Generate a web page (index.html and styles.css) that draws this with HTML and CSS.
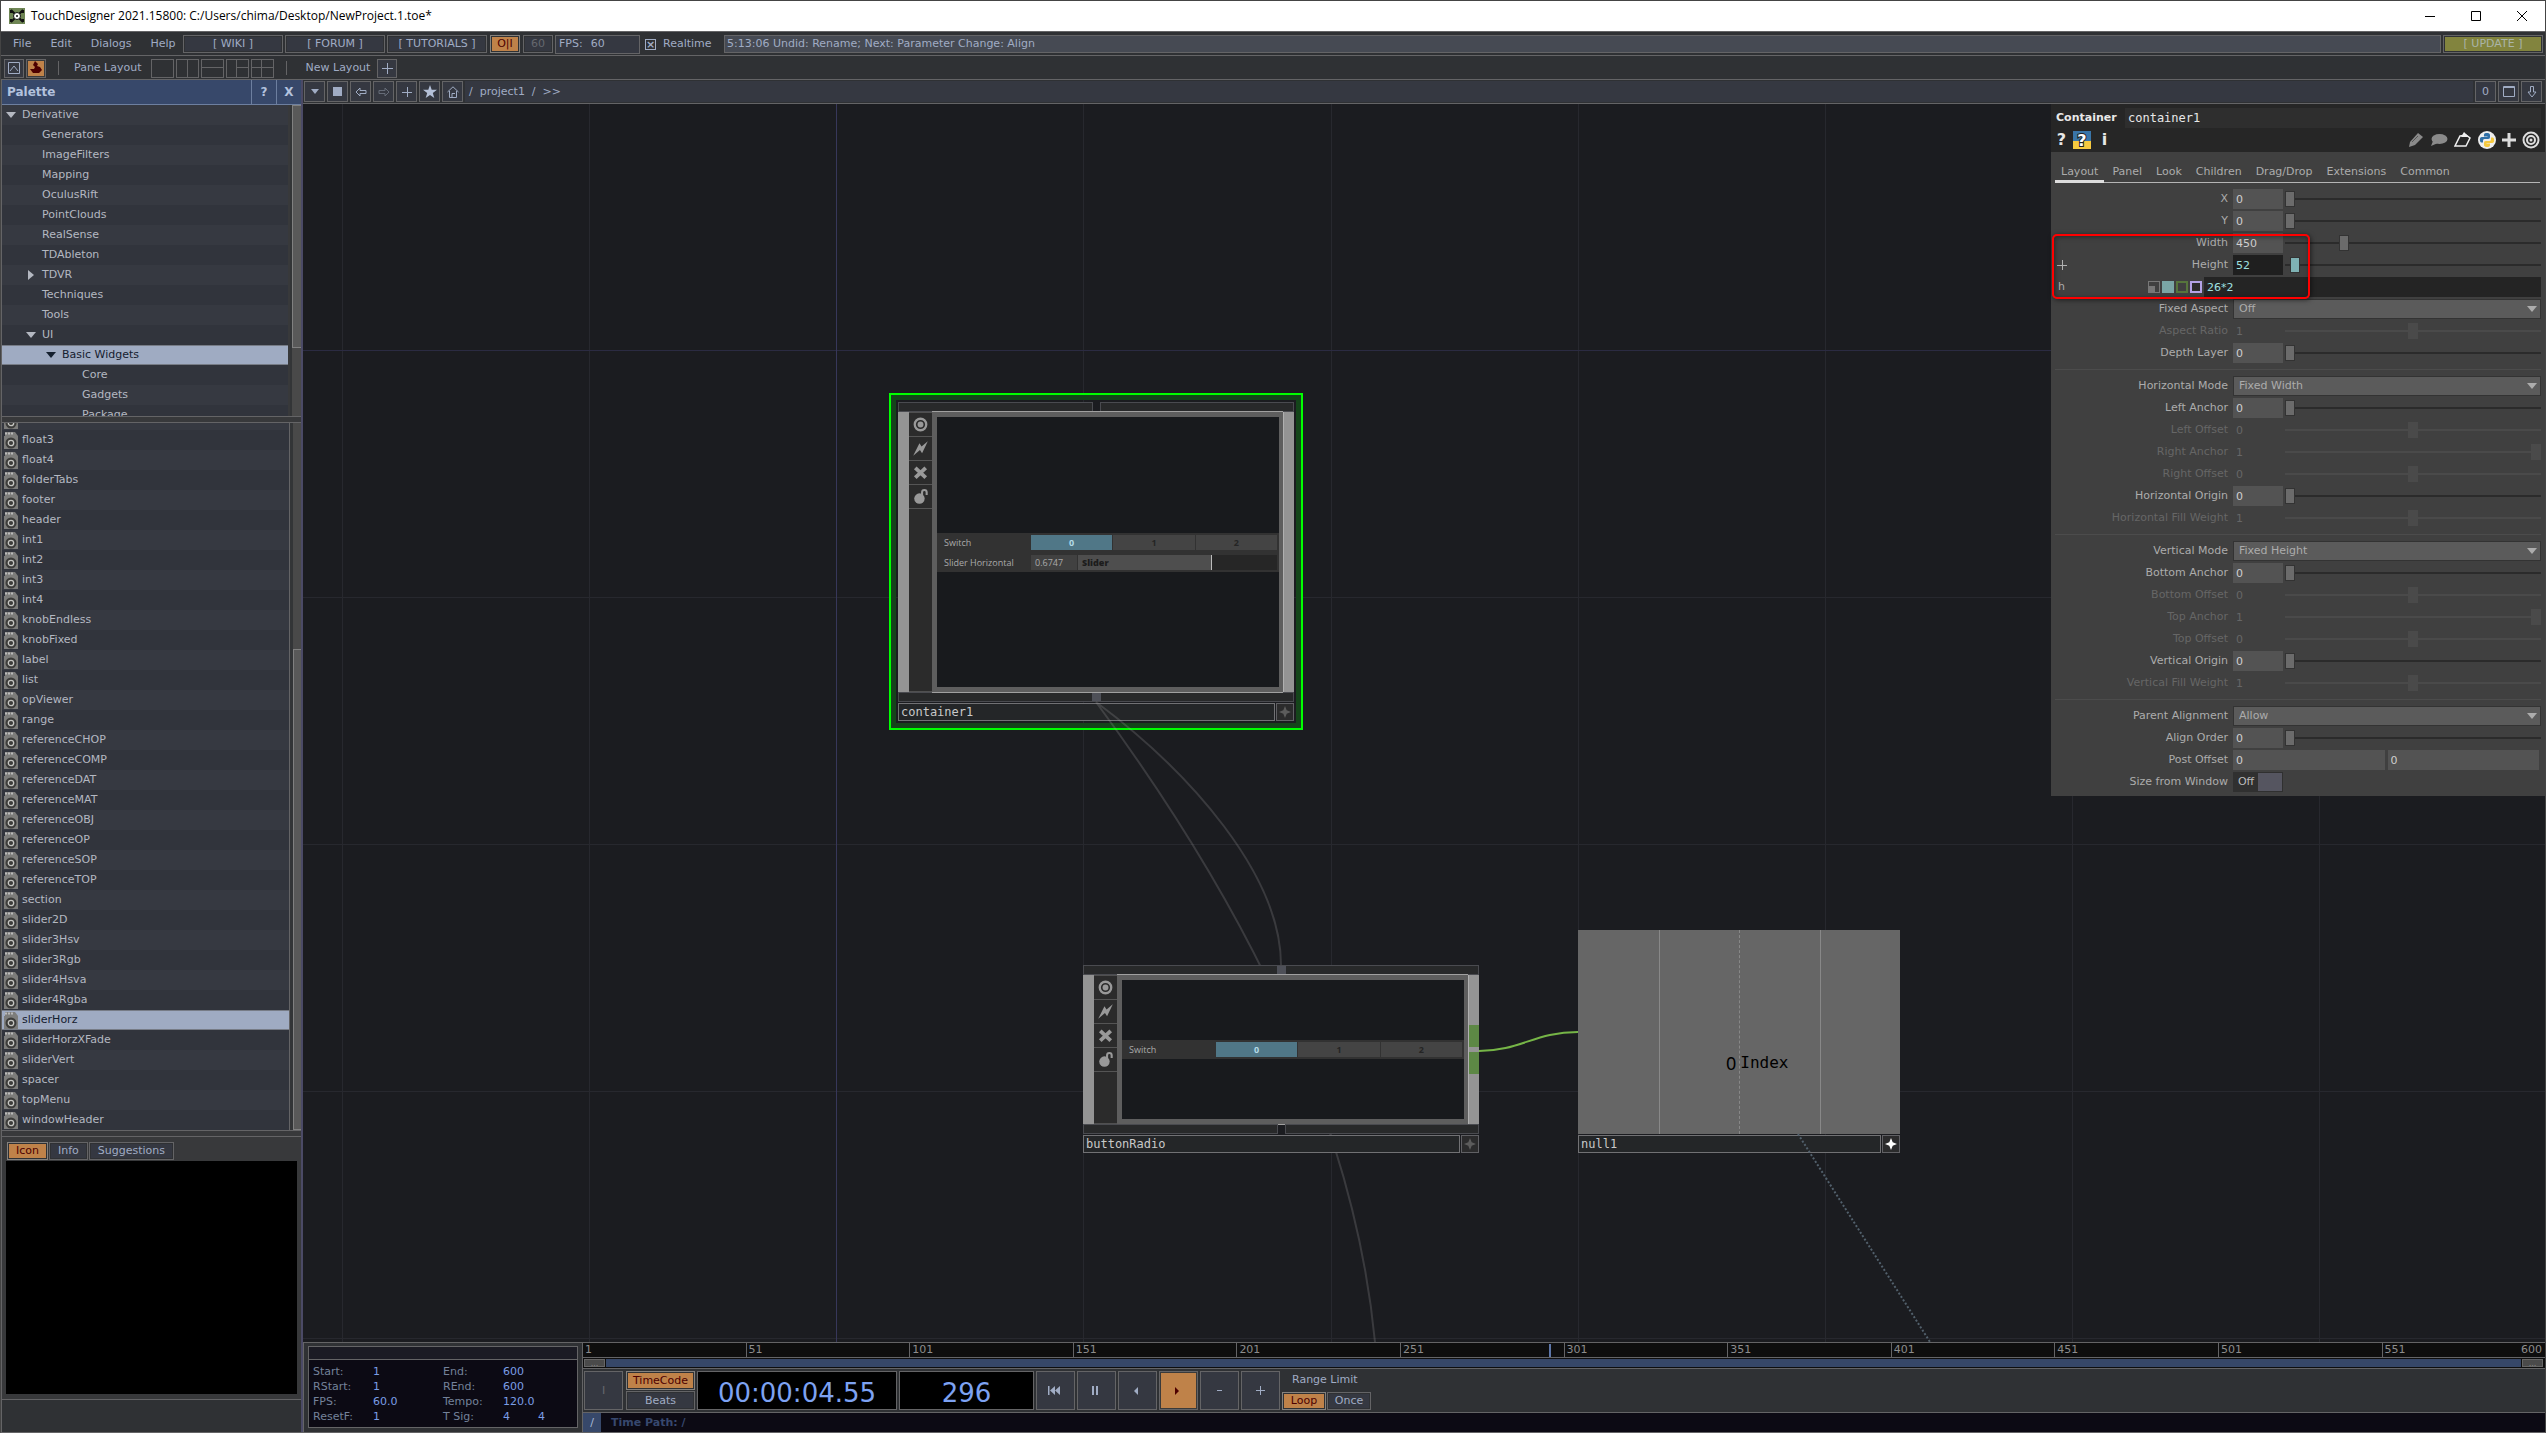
FILE: index.html
```html
<!DOCTYPE html>
<html lang="en">
<head>
<meta charset="utf-8">
<title>TouchDesigner</title>
<link rel="stylesheet" href="styles.css">
</head>
<body>
<svg class="defs" aria-hidden="true">
  <symbol id="comp" viewBox="0 0 14 17"><path d="M0 4V17H14V4L11 0H1V4Z" fill="#7d7d7b"/><path d="M1 1.500H9" stroke="#bbb" stroke-width="2" stroke-dasharray="2 1"/><circle cx="7" cy="11" r="5.500" fill="#3c3c3a"/><circle cx="7" cy="11" r="2.700" fill="none" stroke="#c4c4c0" stroke-width="1.300"/></symbol>
  <symbol id="viewer" viewBox="0 0 22 22"><circle cx="11" cy="11" r="5.500" fill="none" stroke="#999" stroke-width="2.200"/><circle cx="11" cy="11" r="2.800" fill="#999"/></symbol>
  <symbol id="bolt" viewBox="0 0 22 22"><path d="M4 18 10 6 12 9 18 4 12.500 15.500 10.500 12.500Z" fill="#999"/></symbol>
  <symbol id="cross" viewBox="0 0 22 22"><path d="M6 6.500 16 16M16 6.500 6 16" stroke="#999" stroke-width="3.600"/></symbol>
  <symbol id="lock" viewBox="0 0 22 22"><circle cx="10" cy="13" r="5" fill="#999"/><path d="M12.500 10V7a2.200 2.200 0 0 1 4.400 0V9.500" fill="none" stroke="#999" stroke-width="2"/></symbol>
  <symbol id="star4" viewBox="0 0 16 16"><path d="M8 2 9.700 6.300 14 8 9.700 9.700 8 14 6.300 9.700 2 8 6.300 6.300Z" fill="currentColor"/></symbol>
  <symbol id="down" viewBox="0 0 10 6"><path d="M0 0H10L5 6Z" fill="currentColor"/></symbol>
  <symbol id="right" viewBox="0 0 6 10"><path d="M0 0V10L6 5Z" fill="currentColor"/></symbol>
</svg>

<header class="titlebar">
  <svg width="16" height="16" viewBox="0 0 16 16"><rect width="16" height="16" fill="#6f8655"/><path d="M2 2 6 6M14 2 10 6M2 14 6 10M14 14 10 10M2 2V5M14 2V5M2 14V11M14 14V11" stroke="#111" stroke-width="2"/><circle cx="8" cy="8" r="3.500" fill="#fff" stroke="#111"/><circle cx="8" cy="8" r="1" fill="#111"/></svg>
  <span class="title">TouchDesigner 2021.15800: C:/Users/chima/Desktop/NewProject.1.toe*</span>
  <button aria-label="Minimize"><svg width="12" height="12"><path d="M1 6.500H11" stroke="#000"/></svg></button>
  <button aria-label="Maximize"><svg width="12" height="12"><path d="M1.500 1.500H10.500V10.500H1.500Z" stroke="#000" fill="none"/></svg></button>
  <button aria-label="Close"><svg width="12" height="12"><path d="M1 1 11 11M11 1 1 11" stroke="#000"/></svg></button>
</header>

<div class="menubar">
  <nav class="menus"><a href="#">File</a><a href="#">Edit</a><a href="#">Dialogs</a><a href="#">Help</a></nav>
  <button class="btn wide">[ WIKI ]</button>
  <button class="btn wide">[ FORUM ]</button>
  <button class="btn wide">[ TUTORIALS ]</button>
  <button class="btn small on">O|I</button>
  <button class="btn small dim">60</button>
  <div class="fps"><label for="fps">FPS:</label><input id="fps" value="60"></div>
  <label class="realtime"><input type="checkbox" checked>Realtime</label>
  <output class="status">5:13:06 Undid: Rename; Next: Parameter Change: Align</output>
  <button class="btn update">[ UPDATE ]</button>
</div>

<div class="layoutbar">
  <button class="sq" aria-label="Bookmark"><svg width="12" height="12"><path d="M.5 .5H11.500V11.500H.5ZM2 9 6 4 10 9" fill="none" stroke="#a0acc4"/></svg></button>
  <button class="sq on" aria-label="Palette"><svg width="12" height="14"><path d="M5 0 8 3 7 5 10 6 12 9 9 12H3L0 8 4 8 5 6 3 4Z" fill="#4d0000"/></svg></button>
  <i class="vsep"></i>
  <span class="bar-label">Pane Layout</span>
  <button class="pane" aria-label="Single"></button>
  <button class="pane" aria-label="Left right"><svg width="22" height="18"><path d="M11.500 0V18"/></svg></button>
  <button class="pane" aria-label="Top bottom"><svg width="22" height="18"><path d="M0 8.500H22"/></svg></button>
  <button class="pane" aria-label="Three"><svg width="22" height="18"><path d="M10.500 0V18M10.500 8.500H22"/></svg></button>
  <button class="pane" aria-label="Four"><svg width="22" height="18"><path d="M10.500 0V18M0 8.500H22"/></svg></button>
  <i class="vsep"></i>
  <span class="bar-label new">New Layout</span>
  <button class="sq" aria-label="Add layout"><svg width="12" height="12"><path d="M6.500 1V12M1 6.500H12" stroke="#a0acc4"/></svg></button>
</div>

<div class="workspace">
<aside class="palette">
  <div class="pal-head"><h2>Palette</h2><button>?</button><button>X</button></div>
  <div class="tree-wrap">
    <ul class="tree">
      <li><svg width="10" height="6"><use href="#down"/></svg>Derivative</li>
      <li class="d1">Generators</li>
      <li class="d1">ImageFilters</li>
      <li class="d1">Mapping</li>
      <li class="d1">OculusRift</li>
      <li class="d1">PointClouds</li>
      <li class="d1">RealSense</li>
      <li class="d1">TDAbleton</li>
      <li class="d2"><svg width="10" height="10"><use href="#right"/></svg>TDVR</li>
      <li class="d1">Techniques</li>
      <li class="d1">Tools</li>
      <li class="d2"><svg width="10" height="6"><use href="#down"/></svg>UI</li>
      <li class="d3 sel"><svg width="10" height="6"><use href="#down"/></svg>Basic Widgets</li>
      <li class="d4">Core</li>
      <li class="d4">Gadgets</li>
      <li class="d4">Package</li>
    </ul>
    <div class="track"><div class="thumb tree-thumb"></div></div>
  </div>
  <div class="list-wrap">
    <ul class="list">
      <li><svg><use href="#comp"/></svg>float2</li>
      <li><svg><use href="#comp"/></svg>float3</li>
      <li><svg><use href="#comp"/></svg>float4</li>
      <li><svg><use href="#comp"/></svg>folderTabs</li>
      <li><svg><use href="#comp"/></svg>footer</li>
      <li><svg><use href="#comp"/></svg>header</li>
      <li><svg><use href="#comp"/></svg>int1</li>
      <li><svg><use href="#comp"/></svg>int2</li>
      <li><svg><use href="#comp"/></svg>int3</li>
      <li><svg><use href="#comp"/></svg>int4</li>
      <li><svg><use href="#comp"/></svg>knobEndless</li>
      <li><svg><use href="#comp"/></svg>knobFixed</li>
      <li><svg><use href="#comp"/></svg>label</li>
      <li><svg><use href="#comp"/></svg>list</li>
      <li><svg><use href="#comp"/></svg>opViewer</li>
      <li><svg><use href="#comp"/></svg>range</li>
      <li><svg><use href="#comp"/></svg>referenceCHOP</li>
      <li><svg><use href="#comp"/></svg>referenceCOMP</li>
      <li><svg><use href="#comp"/></svg>referenceDAT</li>
      <li><svg><use href="#comp"/></svg>referenceMAT</li>
      <li><svg><use href="#comp"/></svg>referenceOBJ</li>
      <li><svg><use href="#comp"/></svg>referenceOP</li>
      <li><svg><use href="#comp"/></svg>referenceSOP</li>
      <li><svg><use href="#comp"/></svg>referenceTOP</li>
      <li><svg><use href="#comp"/></svg>section</li>
      <li><svg><use href="#comp"/></svg>slider2D</li>
      <li><svg><use href="#comp"/></svg>slider3Hsv</li>
      <li><svg><use href="#comp"/></svg>slider3Rgb</li>
      <li><svg><use href="#comp"/></svg>slider4Hsva</li>
      <li><svg><use href="#comp"/></svg>slider4Rgba</li>
      <li class="sel"><svg><use href="#comp"/></svg>sliderHorz</li>
      <li><svg><use href="#comp"/></svg>sliderHorzXFade</li>
      <li><svg><use href="#comp"/></svg>sliderVert</li>
      <li><svg><use href="#comp"/></svg>spacer</li>
      <li><svg><use href="#comp"/></svg>topMenu</li>
      <li><svg><use href="#comp"/></svg>windowHeader</li>
    </ul>
    <div class="track low"><div class="thumb list-thumb"></div></div>
  </div>
  <div class="info">
    <div class="tabs"><button class="btn on">Icon</button><button class="btn">Info</button><button class="btn">Suggestions</button></div>
    <div class="preview"></div>
  </div>
  <div class="pal-foot"></div>
</aside>

<main class="editor">
  <div class="pathbar">
    <button class="pb" aria-label="Pane type"><svg width="8" height="5"><path d="M0 0H8L4 5Z" fill="#a0acc4"/></svg></button>
    <button class="pb" aria-label="Stop"><svg width="9" height="9"><rect width="9" height="9" fill="#a0acc4"/></svg></button>
    <button class="pb" aria-label="Back"><svg width="12" height="10"><path d="M1 5 5 1V3.500H11V6.500H5V9Z" fill="none" stroke="#a0acc4"/></svg></button>
    <button class="pb" aria-label="Forward"><svg width="12" height="10"><path d="M11 5 7 1V3.500H1V6.500H7V9Z" fill="none" stroke="#666c78"/></svg></button>
    <button class="pb" aria-label="Add"><svg width="10" height="10"><path d="M5.500 0V10M0 5.500H10" stroke="#a0acc4"/></svg></button>
    <button class="pb" aria-label="Bookmarks"><svg width="14" height="13"><path d="M7 0 8.700 4.800H14L9.800 7.900 11.300 13 7 9.900 2.700 13 4.200 7.900 0 4.800H5.300Z" fill="#b4c0d8"/></svg></button>
    <button class="pb" aria-label="Home"><svg width="12" height="12"><path d="M2.500 5V11.500H9.500V5M.5 6 6 .8 11.500 6M5 11V7.500H8" fill="none" stroke="#a0acc4"/></svg></button>
    <div class="path">/&nbsp; project1&nbsp; /&nbsp; &gt;&gt;</div>
    <button class="pb">0</button>
    <button class="pb" aria-label="Maximize pane"><svg width="12" height="11"><path d="M.5 .5H11.500V10.500H.5ZM0 1.500H12" fill="none" stroke="#a0acc4"/></svg></button>
    <button class="pb" aria-label="Link pane"><svg width="10" height="12"><path d="M3.500 .5H6.500V6H9L5 11 1 6H3.500Z" fill="none" stroke="#a0acc4"/></svg></button>
  </div>

  <section class="network">
    <svg class="wires" width="100%" height="100%">
      <g transform="translate(-303 -104)" fill="none">
        <path stroke="#27282e" d="M342.500 104V3000M589.500 104V3000M1083.500 104V3000M1331.500 104V3000M1578.500 104V3000M1825.500 104V3000M2072.500 104V3000M2319.500 104V3000M303 597.500H4000M303 844.500H4000M303 1091.500H4000M303 1338.500H4000"/>
        <path stroke="#2b2b42" d="M303 350.500H4000"/><path stroke="#37375a" d="M836.500 104V3000"/>
      </g>
    </svg>

    <article class="node container1">
      <div class="strip split"><i></i><i></i></div>
      <div class="body tall">
        <i class="side"></i>
        <div class="flags"><svg><use href="#viewer"/></svg><svg><use href="#bolt"/></svg><svg><use href="#cross"/></svg><svg><use href="#lock"/></svg></div>
        <div class="view">
          <div class="band">
            <div class="wrow"><span>Switch</span><button class="w act">0</button><button class="w">1</button><button class="w">2</button></div>
            <div class="wrow"><span>Slider Horizontal</span><span class="val">0.6747</span><b class="fill">Slider</b></div>
          </div>
        </div>
        <i class="side"></i>
      </div>
      <div class="strip plug"><i></i></div>
      <div class="name"><input aria-label="Node name" value="container1"><button aria-label="Activate"><svg><use href="#star4"/></svg></button></div>
    </article>

    <svg class="wires" width="100%" height="100%">
      <g transform="translate(-303 -104)" fill="none" stroke-width="2">
        <path stroke="#aaa" stroke-opacity=".22" d="M1096 702C1190 772 1281 875 1281 965M1096 702C1205 850 1350 1080 1375 1342"/>
        <path stroke="#76b547" d="M1479 1051C1520 1051 1535 1032 1578 1032"/>
      </g>
    </svg>

    <article class="node radio">
      <div class="strip plug"><i></i></div>
      <div class="body short">
        <i class="side"></i>
        <div class="flags"><svg><use href="#viewer"/></svg><svg><use href="#bolt"/></svg><svg><use href="#cross"/></svg><svg><use href="#lock"/></svg></div>
        <div class="view">
          <div class="band">
            <div class="wrow"><span>Switch</span><button class="w act">0</button><button class="w">1</button><button class="w">2</button></div>
          </div>
        </div>
        <div class="side out"><i></i><i></i></div>
      </div>
      <div class="strip split"><i></i><i></i></div>
      <div class="name"><input aria-label="Node name" value="buttonRadio"><button aria-label="Activate"><svg><use href="#star4"/></svg></button></div>
    </article>

    <article class="node null1">
      <div class="chop"><i></i><i></i><i></i><i></i><p><span>0</span><span class="chan">Index</span></p></div>
      <div class="name lit"><input aria-label="Node name" value="null1"><button aria-label="Activate"><svg><use href="#star4"/></svg></button></div>
    </article>

    <svg class="wires over" width="100%" height="100%">
      <g transform="translate(-303 -104)" fill="none" stroke-width="2">
        <path stroke="#52606c" stroke-dasharray="2 2" d="M1798 1134 1930 1342"/>
      </g>
    </svg>

    <form class="params">
      <div class="p-head">
        <div class="p-title"><label for="opname">Container</label><input id="opname" value="container1"></div>
        <div class="p-icons">
          <b>?</b>
          <svg width="18" height="18"><rect width="18" height="18" fill="#3a75a8"/><path d="M0 10H18V18H0Z" fill="#f5c93f"/><text x="9" y="15" text-anchor="middle" class="pyq">?</text></svg>
          <b>i</b>
          <span class="grow"></span>
          <svg width="16" height="16"><path d="M1 15 2 10 10 1 15 5 7 13Z" fill="#8a8a8a"/><path d="M4 10 10 4" stroke="#555" stroke-width="1"/></svg>
          <svg width="18" height="14"><ellipse cx="9.500" cy="6" rx="8" ry="5" fill="#8a8a8a"/><path d="M3 8 1 13 8 10Z" fill="#8a8a8a"/></svg>
          <svg width="18" height="16"><path d="M6 4 12 3 16 6 12 14 1 14Z" fill="none" stroke="#eee" stroke-width="1.500"/><path d="M7 5 10 0 15 5Z" fill="#eee"/></svg>
          <svg width="18" height="18" viewBox="0 0 18 18"><circle cx="9" cy="9" r="9" fill="#eee"/><path d="M9 2C5.500 2 6 3.500 6 5.500H9.500V6H4C2 6 1.500 8 2 10 2.500 12 4 11.500 5 11.500V9.500C5 8 6 8 8 8 11 8 12 8 12 6V4C12 2.500 10.500 2 9 2Z" fill="#2f6fa6"/><path d="M9 16C12.500 16 12 14.500 12 12.500H8.500V12H14C16 12 16.500 10 16 8 15.500 6 14 6.500 13 6.500V8.500C13 10 12 10 10 10 7 10 6 10 6 12V14C6 15.500 7.500 16 9 16Z" fill="#f5c93f"/></svg>
          <svg width="14" height="14"><path d="M7 0V14M0 7H14" stroke="#ddd" stroke-width="3"/></svg>
          <svg width="18" height="18"><g fill="none" stroke="#ddd" stroke-width="2"><circle cx="9" cy="9" r="7.500"/><circle cx="9" cy="9" r="4"/></g><circle cx="9" cy="9" r="1.500" fill="#ddd"/></svg>
        </div>
      </div>
      <nav class="p-tabs"><a href="#" class="cur">Layout</a><a href="#">Panel</a><a href="#">Look</a><a href="#">Children</a><a href="#">Drag/Drop</a><a href="#">Extensions</a><a href="#">Common</a></nav>

      <div class="rows">
        <div class="row"><label for="x">X</label><input id="x" value="0"><input type="range" aria-label="X" value="0"></div>
        <div class="row"><label for="y">Y</label><input id="y" value="0"><input type="range" aria-label="Y" value="0"></div>
        <div class="row"><label for="w">Width</label><input id="w" value="450"><input type="range" aria-label="Width" value="22"></div>
        <div class="row expr"><label for="h">Height</label><input id="h" value="52"><input type="range" aria-label="Height" value="2"></div>
        <div class="row exprline"><label for="he">h</label><i class="m1"></i><i class="m2"></i><i class="m3"></i><i class="m4"></i><input id="he" value="26*2"></div>
        <div class="row sel-row"><label for="fa">Fixed Aspect</label><select id="fa"><option>Off</option></select><svg><use href="#down"/></svg></div>
        <div class="row off"><label for="ar">Aspect Ratio</label><input id="ar" value="1" disabled><input type="range" aria-label="Aspect Ratio" value="50" disabled></div>
        <div class="row"><label for="dl">Depth Layer</label><input id="dl" value="0"><input type="range" aria-label="Depth Layer" value="0"></div>
      </div>
      <div class="rows">
        <div class="row sel-row"><label for="hm">Horizontal Mode</label><select id="hm"><option>Fixed Width</option></select><svg><use href="#down"/></svg></div>
        <div class="row"><label for="la">Left Anchor</label><input id="la" value="0"><input type="range" aria-label="Left Anchor" value="0"></div>
        <div class="row off"><label for="lo">Left Offset</label><input id="lo" value="0" disabled><input type="range" aria-label="Left Offset" value="50" disabled></div>
        <div class="row off"><label for="ra">Right Anchor</label><input id="ra" value="1" disabled><input type="range" aria-label="Right Anchor" value="100" disabled></div>
        <div class="row off"><label for="ro">Right Offset</label><input id="ro" value="0" disabled><input type="range" aria-label="Right Offset" value="50" disabled></div>
        <div class="row"><label for="ho">Horizontal Origin</label><input id="ho" value="0"><input type="range" aria-label="Horizontal Origin" value="0"></div>
        <div class="row off"><label for="hf">Horizontal Fill Weight</label><input id="hf" value="1" disabled><input type="range" aria-label="Horizontal Fill Weight" value="50" disabled></div>
      </div>
      <div class="rows">
        <div class="row sel-row"><label for="vm">Vertical Mode</label><select id="vm"><option>Fixed Height</option></select><svg><use href="#down"/></svg></div>
        <div class="row"><label for="ba">Bottom Anchor</label><input id="ba" value="0"><input type="range" aria-label="Bottom Anchor" value="0"></div>
        <div class="row off"><label for="bo">Bottom Offset</label><input id="bo" value="0" disabled><input type="range" aria-label="Bottom Offset" value="50" disabled></div>
        <div class="row off"><label for="ta">Top Anchor</label><input id="ta" value="1" disabled><input type="range" aria-label="Top Anchor" value="100" disabled></div>
        <div class="row off"><label for="to">Top Offset</label><input id="to" value="0" disabled><input type="range" aria-label="Top Offset" value="50" disabled></div>
        <div class="row"><label for="vo">Vertical Origin</label><input id="vo" value="0"><input type="range" aria-label="Vertical Origin" value="0"></div>
        <div class="row off"><label for="vf">Vertical Fill Weight</label><input id="vf" value="1" disabled><input type="range" aria-label="Vertical Fill Weight" value="50" disabled></div>
      </div>
      <div class="rows">
        <div class="row sel-row"><label for="pa">Parent Alignment</label><select id="pa"><option>Allow</option></select><svg><use href="#down"/></svg></div>
        <div class="row"><label for="ao">Align Order</label><input id="ao" value="0"><input type="range" aria-label="Align Order" value="0"></div>
        <div class="row pair"><label for="po">Post Offset</label><input id="po" value="0"><input aria-label="Post Offset Y" value="0"></div>
        <div class="row"><label for="sw">Size from Window</label><button type="button" id="sw" class="toggle"><span>Off</span></button></div>
      </div>
      <div class="mark"></div>
    </form>
  </section>
</main>

<footer class="timeline">
  <div class="stats-box"><div class="stats">
    <div class="stats-head"></div>
    <dl>
      <dt>Start:</dt><dd>1</dd><dt>End:</dt><dd>600</dd>
      <dt>RStart:</dt><dd>1</dd><dt>REnd:</dt><dd>600</dd>
      <dt>FPS:</dt><dd>60.0</dd><dt>Tempo:</dt><dd>120.0</dd>
      <dt>ResetF:</dt><dd>1</dd><dt>T Sig:</dt><dd>4<span>4</span></dd>
    </dl>
  </div></div>
  <div class="time">
    <div class="ruler"><span>1</span><span>51</span><span>101</span><span>151</span><span>201</span><span>251</span><span>301</span><span>351</span><span>401</span><span>451</span><span>501</span><span class="last">551<em>600</em></span><i class="playhead"></i></div>
    <div class="range"><button>...</button><i></i><button>...</button></div>
    <div class="transport">
      <button class="tb dim">I</button>
      <div class="stack"><button class="btn on">TimeCode</button><button class="btn">Beats</button></div>
      <output class="clock tc">00:00:04.55</output>
      <output class="clock fr">296</output>
      <button class="tb play" aria-label="Rewind"><svg width="12" height="9"><path d="M.5 0V9" stroke="#a0acc4" stroke-width="2"/><path d="M2 4.500 7 0V9ZM7 4.500 12 0V9Z" fill="#a0acc4"/></svg></button>
      <button class="tb play" aria-label="Pause"><svg width="6" height="9"><path d="M1 0V9M5 0V9" stroke="#a0acc4" stroke-width="2"/></svg></button>
      <button class="tb play" aria-label="Play back"><svg width="4" height="8"><path d="M4 0V8L0 4Z" fill="#a0acc4"/></svg></button>
      <button class="tb play on" aria-label="Play"><svg width="4" height="8"><path d="M0 0V8L4 4Z" fill="#4d0000"/></svg></button>
      <button class="tb" aria-label="Previous frame"><svg width="5" height="3"><path d="M0 1.500H5" stroke="#a0acc4"/></svg></button>
      <button class="tb" aria-label="Next frame"><svg width="9" height="9"><path d="M4.500 0V9M0 4.500H9" stroke="#a0acc4"/></svg></button>
      <div class="limit"><span>Range Limit</span><div><button class="btn on">Loop</button><button class="btn">Once</button></div></div>
    </div>
    <div class="tpath"><span>/</span><b>Time Path: /</b></div>
  </div>
</footer>
</div>
</body>
</html>
```
FILE: styles.css
```css
* { box-sizing: border-box; }
:root { --line: #646466; --ink: #a0acc4; --bar: #2f3134; --cell: #353841; --orange: #bf8249; --deep: #4d0000; }
body {
  margin: 0; height: 100vh; overflow: hidden; display: flex; flex-direction: column;
  font: 11px/14px "DejaVu Sans", sans-serif; color: var(--ink);
  background: var(--bar); border: 1px solid #444; border-bottom-color: var(--line);
}
button, input, select, output { font: inherit; color: inherit; margin: 0; padding: 0; border: 0; background: none; border-radius: 0; min-width: 0; }
button { display: flex; align-items: center; justify-content: center; }
a { color: inherit; text-decoration: none; }
ul, h2, p, dl, dd { margin: 0; padding: 0; list-style: none; }
svg { flex: none; display: block; }
.defs { position: absolute; width: 0; height: 0; }
.grow { flex: 1; }

/* window title */
.titlebar { flex: none; height: 30px; background: #fff; color: #000; display: flex; align-items: center; padding-left: 8px; font: 12px/16px "Open Sans", sans-serif; }
.title { flex: 1; margin-left: 6px; }
.titlebar button { width: 46px; height: 30px; }

/* top bars */
.menubar { flex: none; height: 24px; display: flex; align-items: center; gap: 2px; border-top: 1px solid var(--line); padding: 1px 2px 0 0; }
.menus { display: flex; gap: 19px; width: 180px; padding-left: 12px; }
.btn { background: var(--cell); border: 1px solid var(--line); height: 18px; box-shadow: inset 0 0 0 1px #2f3134; white-space: nowrap; }
.btn.on { background: var(--orange); color: var(--deep); border-color: #85827e; }
.dim { color: #65686f; }
.wide, .update { width: 100px; }
.small { width: 30px; margin-left: 1px; }
.update { background: #82843e; color: #aab4a8; }
.fps { width: 85px; height: 19px; background: var(--cell); border: 1px solid var(--line); display: flex; align-items: center; gap: 8px; padding-left: 3px; }
.fps input { width: 40px; }
.realtime { display: flex; align-items: center; gap: 7px; width: 77px; margin-left: 3px; }
.realtime input { appearance: none; width: 11px; height: 11px; border: 1px solid var(--ink); display: grid; place-items: center; }
.realtime input::after { content: "×"; font: bold 11px/9px "DejaVu Sans"; color: var(--ink); }
.status { flex: 1; height: 18px; background: #464a53; border: 1px solid var(--line); padding-left: 2px; line-height: 16px; }
.layoutbar { flex: none; height: 24px; display: flex; align-items: center; gap: 2px; border-top: 1px solid var(--line); padding: 1px 0 0 3px; }
.sq { width: 20px; height: 19px; background: var(--cell); border: 1px solid var(--line); }
.sq.on { background: var(--orange); box-shadow: inset 0 0 0 1px #3a3a3a; }
.vsep { width: 1px; height: 14px; background: var(--line); margin: 0 10px; }
.bar-label { margin: 0 7px 0 3px; }
.bar-label.new { margin-right: 5px; margin-left: 7px; }
.pane { width: 23px; height: 19px; border: 1px solid var(--line); }
.pane path { stroke: var(--line); fill: none; }

/* workspace: palette left, editor and timeline right */
.workspace { flex: 1; min-height: 0; display: grid; grid-template: 1fr 90px / 302px 1fr; border-top: 1px solid var(--line); }
.palette { grid-row: 1 / 3; display: flex; flex-direction: column; background: #38393b; border-left: 1px solid var(--line); border-right: 2px solid #4b4a66; min-height: 0; }
.pal-head { flex: none; height: 25px; background: #37486a; border-bottom: 1px solid #6d7f9f; display: flex; color: #b3c2dd; font-weight: bold; }
.pal-head h2 { flex: 1; font-size: 12px; line-height: 25px; padding-left: 5px; }
.pal-head button { width: 25px; border-left: 1px solid #6d7f9f; font-size: 12px; font-weight: bold; }
.tree-wrap { flex: none; height: 312px; display: flex; border-bottom: 1px solid var(--line); }
.tree, .list { flex: 1; overflow: hidden; display: flex; flex-direction: column; color: #b4b8c1; }
.tree { margin-right: 2px; }
.tree li, .list li { flex: none; height: 20px; display: flex; align-items: center; background: #31343c; }
.tree li:nth-child(odd), .list li:nth-child(odd) { background: #363941; }
.tree li { padding-left: 4px; gap: 6px; }
.tree .d1 { padding-left: 40px; }
.tree .d2 { padding-left: 24px; }
.tree .d3 { padding-left: 44px; }
.tree .d4 { padding-left: 80px; }
.palette li.sel { background: #9fabc2; color: #15202f; box-shadow: inset 0 1px #777c86, inset 0 -1px #777c86; }
.track { width: 11px; background: #494949; border-left: 2px solid #333537; }
.track.low { border-left-width: 3px; display: flex; flex-direction: column; justify-content: flex-end; }
.thumb { background: #595959; border: 1px solid #808080; border-right: 0; }
.tree-thumb { height: 78%; }
.list-thumb { height: 68%; }
.list-wrap { flex: 1; min-height: 0; margin-top: 5px; display: flex; border-bottom: 1px solid var(--line); border-top: 1px solid var(--line); }
.list { justify-content: flex-end; border-right: 1px solid var(--line); }
.list li { padding-left: 2px; gap: 4px; }
.list svg { width: 14px; height: 17px; }
.info { flex: none; height: 263px; margin-top: 5px; border-top: 1px solid var(--line); padding: 5px 4px; display: flex; flex-direction: column; }
.tabs { display: flex; gap: 1px; padding-left: 1px; }
.tabs .btn { padding: 0 8px; }
.preview { flex: 1; background: #000; margin-top: 1px; }
.pal-foot { flex: none; height: 33px; border-top: 1px solid var(--line); background: var(--bar); }

/* editor */
.editor { display: flex; flex-direction: column; min-width: 0; min-height: 0; }
.pathbar { flex: none; height: 24px; display: flex; align-items: center; gap: 2px; padding: 0 3px 0 1px; border-bottom: 1px solid var(--line); background: var(--bar); }
.pb { width: 21px; height: 21px; background: var(--cell); border: 1px solid var(--line); }
.path { flex: 1; background: var(--cell); height: 21px; line-height: 21px; padding-left: 4px; }
.network { flex: 1; min-height: 0; position: relative; overflow: hidden; background: #1b1c20; }
.wires { position: absolute; inset: 0; }
.wires.over { pointer-events: none; }

/* nodes on the canvas */
.node { position: absolute; }
.container1 { left: 586px; top: 289px; width: 414px; border: 2px solid #00ff00; box-shadow: inset 0 0 0 5px #14451a; padding: 7px; }
.radio { left: 780px; top: 861px; width: 396px; }
.null1 { left: 1275px; top: 826px; width: 322px; }
.strip { height: 10px; display: flex; justify-content: center; }
.split { gap: 7px; }
.split i { flex: 1; background: #28292a; border: 1px solid #4a4b50; }
.plug { background: #28292a; border: 1px solid #4a4b50; }
.plug i { width: 9px; background: #4e5058; }
.body { display: flex; }
.tall { height: 280px; }
.short { height: 149px; }
.side { width: 11px; background: #949494; }
.flags { width: 23px; background: #2b2b2b; border: solid #505050; border-width: 1px 0; }
.flags svg { width: 23px; height: 24px; border-bottom: 1px solid #555; }
.view { flex: 1; border: 5px solid #5e5e5e; border-right-width: 4px; box-shadow: 0 -1px #a0a0a0, 0 1px #a0a0a0; display: flex; flex-direction: column; justify-content: center; background: #181a1d; }
.body .side:last-child { border-left: 1px solid #b0b0b0; }
.out { display: flex; flex-direction: column; justify-content: center; gap: 5px; }
.out i { height: 22px; background: #5d8845; }
.band { background: #323232; padding: 2px; display: grid; gap: 5px; font: 9px/15px "Open Sans", sans-serif; color: #aaa; }
.wrow { display: grid; grid-template-columns: 91px 1fr 1fr 1fr; height: 15px; column-gap: 1px; }
.wrow > span:first-child { padding-left: 5px; }
.w { background: #444; color: #252525; font-weight: bold; }
.w.act { background: #507787; color: #b5dbe8; }
.wrow:nth-child(2) { grid-template-columns: 91px 46px 1fr; }
.val { background: #414141; padding-left: 4px; }
.fill { background: linear-gradient(90deg, #4e4e4e 0 133px, #bbb 133px 134px, #262626 134px); color: #1c1c1c; padding-left: 4px; font-weight: 800; }
.name { margin-top: 1px; display: flex; gap: 1px; }
.name input { flex: 1; height: 18px; background: #242628; border: 1px solid #717174; color: #c9c9c9; font: 12px/16px "DejaVu Sans Mono", monospace; padding-left: 2px; }
.name button { width: 18px; height: 18px; border: 1px solid #606064; background: #2b2b2c; color: #5c5c5c; }
.name.lit button { color: #fff; }
.name svg { width: 16px; height: 16px; }
.chop { height: 204px; background: #666; display: grid; grid-template-columns: repeat(4, 1fr); position: relative; }
.chop i { border-left: 1px solid #888; }
.chop i:first-child { border: 0; }
.chop i:nth-child(3) { border-left-style: dashed; }
.chop p { position: absolute; left: 148px; top: 122px; color: #000; font: 18px/22px "Noto Sans", sans-serif; display: flex; gap: 4px; }
.chop .chan { font: 16px/22px "DejaVu Sans Mono", monospace; }

/* parameter panel */
.params { position: absolute; top: 0; right: 0; width: 494px; background: #404040; color: #acacac; padding-bottom: 4px; }
.p-head { background: #262626; padding: 4px; color: #e8e8e8; height: 48px; }
.p-title { display: flex; height: 20px; align-items: center; gap: 8px; padding-left: 1px; }
.p-title label { font-weight: bold; width: 61px; }
.p-title input { flex: 1; height: 20px; background: #2e2e2e; font: 12px/18px "DejaVu Sans Mono", monospace; padding-left: 3px; }
.p-icons { display: flex; align-items: center; height: 22px; gap: 6px; margin-top: 1px; padding: 0 1px; }
.p-icons b { font-size: 16px; width: 11px; text-align: center; }
.p-icons svg + b { margin-left: 2px; }
.pyq { font: bold 16px "DejaVu Sans"; fill: #fff; stroke: #222; stroke-width: 2px; paint-order: stroke; }
.p-tabs { display: flex; gap: 2px; margin: 10px 5px 6px 4px; height: 21px; border-bottom: 1px solid #b5b5b5; }
.p-tabs a { padding: 3px 6px 0; height: 21px; }
.p-tabs .cur { border-bottom: 3px solid #ddd; }
.rows { margin: 0 4px; display: grid; gap: 2px; }
.rows + .rows { border-top: 1px solid #4c4c4c; margin-top: 6px; padding-top: 6px; }
.row { height: 20px; display: grid; grid-template-columns: 173px 50px 1fr; align-items: center; column-gap: 5px; }
.row label { text-align: right; white-space: nowrap; }
.row input:not([type=range]) { height: 20px; background: #535353; color: #cfcfcf; padding-left: 3px; width: 100%; }
.row.off, .row.off input:not([type=range]) { color: #666; }
.row.off input:not([type=range]) { background: none; }
.row input[type=range] { appearance: none; height: 16px; width: calc(100% + 3px); margin-left: -3px; background: linear-gradient(#2b2b2b, #2b2b2b) 0 50% / 100% 2px no-repeat; }
.row input[type=range]::-webkit-slider-thumb { appearance: none; width: 10px; height: 16px; background: #6b6b6b; border: 1px solid #333; }
.row.off input[type=range] { background-image: linear-gradient(#4a4a4a, #4a4a4a); }
.row.off input[type=range]::-webkit-slider-thumb { background: #4a4a4a; border-color: #4a4a4a; }
.row.expr { background: linear-gradient(#b0b0b0, #b0b0b0) 2px 50% / 10px 1px no-repeat, linear-gradient(#b0b0b0, #b0b0b0) 7px 50% / 1px 10px no-repeat; }
.row.expr input:not([type=range]) { background: #1f1f1f; color: #9fe0e0; }
.row.expr input[type=range]::-webkit-slider-thumb { background: #7fb2b4; }
.row.exprline { grid-template-columns: 91px 12px 12px 12px 12px 1fr; column-gap: 2px; }
.row.exprline label { text-align: left; padding-left: 3px; }
.row.exprline input:not([type=range]) { background: #242424; color: #9fe0e0; }
.exprline i { width: 12px; height: 12px; border: 1px solid #777; }
.exprline .m1 { background: linear-gradient(#777, #777) 0 100% / 6px 6px no-repeat; }
.exprline .m2 { background: #7aa6a6; border-color: #7aa6a6; }
.exprline .m3 { border: 2px solid #56753c; }
.exprline .m4 { border: 2px solid #b3a2e6; background: #2c2c2c; }
.row select { grid-column: 2 / 4; appearance: none; height: 20px; width: 100%; background: #5b5b5b; border: 1px solid #333; padding-left: 5px; }
.sel-row { grid-template-columns: 173px 1fr 10px; }
.sel-row select, .sel-row svg { grid-row: 1; }
.sel-row svg { grid-column: 3; width: 10px; height: 6px; margin-left: -4px; pointer-events: none; }
.pair { grid-template-columns: 173px 1fr 1fr; }
.pair input + input { width: calc(100% + 2px); margin-left: -2px; }
.toggle { width: 50px; height: 20px; background: #555560; border: 1px solid #303030; justify-content: flex-start; }
.toggle span { background: #303030; width: 24px; height: 18px; line-height: 18px; color: #bbb; text-align: center; }
.mark { position: absolute; left: 1px; top: 130px; width: 258px; height: 65px; border: 2px solid #f00; border-radius: 5px; box-shadow: 1px 1px 5px #0008, inset 1px 1px 5px #0006; pointer-events: none; }

/* timeline */
.timeline { display: flex; border-top: 1px solid var(--line); background: var(--bar); min-width: 0; }
.stats-box { width: 279px; padding: 3px 4px; flex: none; border-left: 1px solid var(--line); }
.stats { border: 1px solid var(--line); background: #0c0a14; height: 82px; }
.stats-head { height: 13px; background: #1b1b24; border-bottom: 1px solid var(--line); }
.stats dl { display: grid; grid-template-columns: 60px 70px 60px 1fr; grid-auto-rows: 15px; padding: 5px 0 0 4px; color: #74829a; }
.stats dd { color: #7b9ee6; }
.stats dd span { margin-left: 28px; }
.time { flex: 1; border-left: 1px solid var(--line); display: flex; flex-direction: column; min-width: 0; }
.ruler { height: 15px; background: #0e0e0e; display: flex; position: relative; border-bottom: 1px solid var(--line); color: #8c8c8c; }
.ruler span { flex: 50 1 0; border-left: 1px solid var(--line); padding-left: 2px; line-height: 14px; }
.ruler span:first-child { border: 0; }
.ruler .last { flex-grow: 49; display: flex; justify-content: space-between; padding-right: 3px; }
.ruler em { font-style: normal; }
.playhead { position: absolute; left: 49.25%; top: 1px; width: 2px; height: 13px; background: #5d76a8; }
.range { height: 11px; background: #0e0e0e; display: flex; gap: 1px; padding: 1px 2px 1px 1px; border-bottom: 1px solid var(--line); }
.range i { flex: 1; background: #364768; }
.range button { width: 21px; background: #4a4a4a; border: 1px solid #666; color: #888; font-size: 8px; line-height: 3px; }
.transport { height: 43px; padding: 2px 2px 2px 1px; display: flex; gap: 2px; }
.tb { width: 39px; height: 39px; background: var(--cell); border: 1px solid var(--line); }
.tb.play { padding-right: 4px; }
.tb.on { background: var(--orange); box-shadow: inset 0 0 0 1px #3a3a3a; }
.tb.dim { color: #65686f; }
.stack { width: 69px; display: grid; gap: 1px; grid-auto-rows: 19px; margin-left: 1px; }
.stack .btn { height: 19px; }
.clock { height: 39px; background: #000; border: 1px solid var(--line); color: #7da2f2; font-size: 26px; line-height: 42px; text-align: center; }
.tc { width: 200px; }
.fr { width: 135px; }
.limit { display: flex; flex-direction: column; justify-content: space-between; height: 39px; }
.limit span { padding: 2px 0 0 10px; }
.limit div { display: flex; gap: 1px; }
.limit .btn { width: 44px; }
.tpath { flex: 1; border-top: 1px solid var(--line); background: #0c0a14; display: flex; align-items: center; color: #37486e; gap: 10px; }
.tpath span { width: 18px; align-self: stretch; background: #37486a; color: #a9b9d6; text-align: center; line-height: 19px; }
```
